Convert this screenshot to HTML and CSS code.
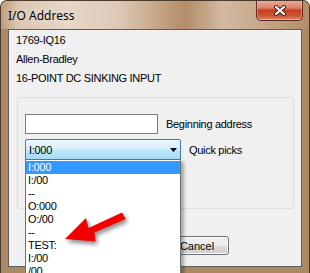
FILE: index.html
```html
<!DOCTYPE html>
<html lang="en">
<head>
  <meta charset="UTF-8" />
  <title>I/O Address</title>
  <link rel="stylesheet" href="styles.css">
</head>
<body>
  <div class="window">
    <div class="titlebar">
      <span class="title">I/O Address</span>
      <button class="close" type="button">
        <svg width="14" height="11" viewBox="0 0 14 11">
          <path d="M3 2 L11 9 M11 2 L3 9" stroke="#3b1d16" stroke-width="4" stroke-linecap="round" fill="none"/>
          <path d="M3 2 L11 9 M11 2 L3 9" stroke="#fff" stroke-width="2.2" stroke-linecap="round" fill="none"/>
        </svg>
      </button>
    </div>

    <div class="client">
      <div class="info">
        <div>1769-IQ16</div>
        <div>Allen-Bradley</div>
        <div>16-POINT DC SINKING INPUT</div>
      </div>

      <div class="group">
        <div class="row">
          <input class="text-input" type="text" />
          <label>Beginning address</label>
        </div>
        <div class="row combo-row">
          <div class="combo">
            <span>I:000</span>
            <svg class="caret" width="7" height="4" viewBox="0 0 7 4"><polygon points="0,0 7,0 3.5,4" fill="#000"/></svg>
            <ul class="dropdown">
              <li class="selected">I:000</li>
              <li>I:/00</li>
              <li>--</li>
              <li>O:000</li>
              <li>O:/00</li>
              <li>--</li>
              <li>TEST:</li>
              <li>I:/00</li>
              <li>/00</li>
            </ul>
          </div>
          <label>Quick picks</label>
        </div>
      </div>

      <div class="buttons">
        <button class="btn" type="button">OK</button>
        <button class="btn" type="button">Cancel</button>
      </div>
    </div>

    <!-- callout arrow pointing at the TEST: entry -->
    <svg class="pointer" width="80" height="50" viewBox="54 200 80 50">
      <polygon points="65,239 86,218 88.5,228 122,212.5 125.7,219 94.5,232.5 95.5,241.5" fill="#f20000"/>
    </svg>
  </div>
</body>
</html>
```

FILE: styles.css
```css
* { box-sizing: border-box; }
body { margin: 0; overflow: hidden; font-family: "Liberation Sans", Arial, sans-serif; font-size: 11px; letter-spacing: -0.3px; color: #000; }

.window { position: relative; width: 310px; height: 273px; padding: 0 7px; overflow: hidden; background: #ab8762; border: 1px solid #4b3b2d; border-bottom: none; border-radius: 7px 7px 0 0; }

.titlebar { display: flex; align-items: flex-start; height: 28px; margin: 0 -7px; padding: 0 6px 0 7px; background: linear-gradient(90deg, #bf9c7c 0%, #dac6b2 6%, #e6d7c8 22%, #dccab8 38%, #c4a282 52%, #b48c69 60%, #d2baa2 72%, #c8a98b 84%, #b48d69 100%); }
.title { align-self: center; font-family: "Noto Sans", "Open Sans", sans-serif; font-size: 12px; letter-spacing: 0; text-shadow: 0 0 8px rgba(255,255,255,0.9); }
.close { display: flex; align-items: center; justify-content: center; margin: -1px 0 0 auto; width: 47px; height: 21px; padding: 0; border: 1px solid #5b2a20; border-top: none; border-radius: 0 0 5px 5px; background: linear-gradient(#eab1a2 0%, #dd7d66 40%, #c73e20 52%, #cd5537 80%, #e08c72 100%); box-shadow: inset 0 0 0 1px rgba(255,255,255,0.3); }

.client { height: 238px; background: #f0f0f0; border: 1px solid #5f5f5f; }
.info { padding: 1px 0 0 7px; line-height: 19px; }

.group { height: 112px; margin: 9px 7px 0 8px; padding: 16px 0 0 7px; border: 1px solid #d5dfe5; border-radius: 3px; }
.row { display: flex; align-items: center; gap: 8px; }
.combo-row { margin-top: 5px; }
.text-input { width: 133px; height: 20px; margin: 0; padding: 0; border: 1px solid #7d7d7d; background: #fff; }

.combo { position: relative; display: flex; align-items: center; width: 156px; height: 21px; padding-left: 3px; border: 1px solid #3c7fb1; border-radius: 2px; background: linear-gradient(#eaf6fd 0%, #d9f0fc 48%, #bee6fd 52%, #a7d9f5 100%); }
.caret { margin: 1px 3px 0 auto; }
.dropdown { position: absolute; left: -1px; top: 19px; z-index: 2; width: 156px; height: 140px; margin: 0; padding: 1px 0 0; list-style: none; background: #fff; border: 1px solid #707070; box-shadow: 3px 3px 3px rgba(0,0,0,0.3); }
.dropdown li { height: 13px; line-height: 13px; padding-left: 2px; }
.dropdown .selected { background: #3399ff; color: #fff; }

.buttons { display: flex; gap: 6px; margin-top: 27px; padding-left: 86px; }
.btn { width: 64px; height: 19px; padding: 0; font: inherit; border: 1px solid #707070; border-radius: 3px; background: linear-gradient(#f2f2f2 0%, #ebebeb 50%, #dddddd 51%, #cfcfcf 100%); box-shadow: inset 0 0 0 1px #fbfbfb; }

.pointer { position: absolute; left: 53px; top: 199px; z-index: 3; overflow: visible; filter: drop-shadow(2px 3px 2px rgba(0,0,0,0.45)); }
```
